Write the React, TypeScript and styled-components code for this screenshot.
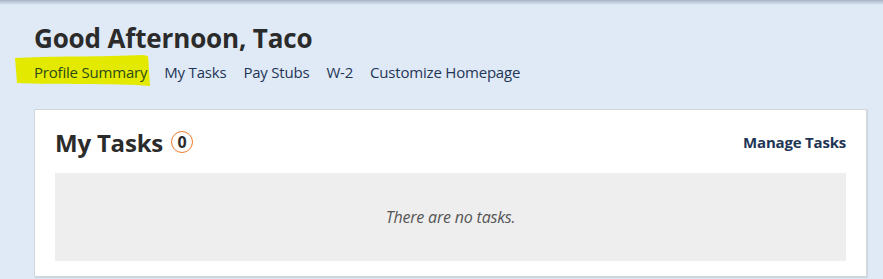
import styled, { createGlobalStyle } from "styled-components";

const GlobalStyle = createGlobalStyle`
  html, body {
    margin: 0;
    padding: 0;
    background: #dfeaf6;
    font-family: "Open Sans", "Noto Sans", sans-serif;
  }
`;

const Page = styled.div`
  position: relative;
  height: 279px;
  padding: 0 16px 0 34px;
  overflow: hidden;
  &::before {
    content: "";
    position: absolute;
    left: 0;
    right: 0;
    top: 0;
    height: 5px;
    background: linear-gradient(#a7b3c3, rgba(223, 234, 246, 0));
  }
`;

const Greeting = styled.h1`
  margin: 0;
  padding-top: 21px;
  font-size: 26px;
  font-weight: 700;
  color: #2b2b2b;
  line-height: 34px;
  letter-spacing: -0.15px;
`;

const Nav = styled.nav`
  display: flex;
  gap: 17px;
  margin-top: 3px;
  height: 28px;
  align-items: center;
`;

const NavLink = styled.a<{ $highlight?: boolean }>`
  position: relative;
  font-size: 15px;
  line-height: 20px;
  color: ${(p) => (p.$highlight ? "#2d4a18" : "#1f3556")};
  text-decoration: none;
  letter-spacing: -0.2px;
  z-index: 1;
`;

const Highlight = styled.svg`
  position: absolute;
  left: -19px;
  top: -7px;
  width: 136px;
  height: 31px;
  z-index: -1;
`;

const Card = styled.section`
  margin-top: 23px;
  background: #fff;
  border: 1px solid #d3d7dc;
  box-shadow: 1px 1px 1px rgba(0, 0, 0, 0.08);
  padding: 16px 20px 15px 20px;
`;

const CardHeader = styled.div`
  display: flex;
  align-items: center;
  justify-content: space-between;
  height: 32px;
  margin-bottom: 15px;
`;

const Title = styled.h2`
  display: flex;
  align-items: center;
  gap: 8px;
  margin: 0;
  font-size: 24px;
  font-weight: 700;
  color: #2b2b2b;
  letter-spacing: -0.2px;
`;

const Badge = styled.span`
  display: inline-flex;
  align-items: center;
  justify-content: center;
  width: 20px;
  height: 20px;
  border: 1.5px solid #f07a2a;
  border-radius: 50%;
  font-size: 16px;
  font-weight: 700;
  color: #2b2b2b;
`;

const ManageLink = styled.a`
  font-size: 15px;
  font-weight: 700;
  color: #1f3556;
  text-decoration: none;
  letter-spacing: -0.2px;
`;

const Empty = styled.div`
  display: flex;
  align-items: center;
  justify-content: center;
  height: 88px;
  background: #eeeeee;
  font-size: 16px;
  font-style: italic;
  color: #555;
  letter-spacing: -0.2px;
`;

export default function App() {
  return (
    <>
      <GlobalStyle />
      <Page>
        <Greeting>Good Afternoon, Taco</Greeting>
        <Nav>
          <NavLink $highlight>
            <Highlight viewBox="0 0 136 31" preserveAspectRatio="none">
              <path
                d="M0 3 C30 1 90 2 128 0 L133 1 C134 10 134 20 135 31 C100 28 40 30 2 28 Z"
                fill="#e3ea00"
              />
            </Highlight>
            Profile Summary
          </NavLink>
          <NavLink>My Tasks</NavLink>
          <NavLink>Pay Stubs</NavLink>
          <NavLink>W-2</NavLink>
          <NavLink>Customize Homepage</NavLink>
        </Nav>
        <Card>
          <CardHeader>
            <Title>
              My Tasks <Badge>0</Badge>
            </Title>
            <ManageLink>Manage Tasks</ManageLink>
          </CardHeader>
          <Empty>There are no tasks.</Empty>
        </Card>
      </Page>
    </>
  );
}
